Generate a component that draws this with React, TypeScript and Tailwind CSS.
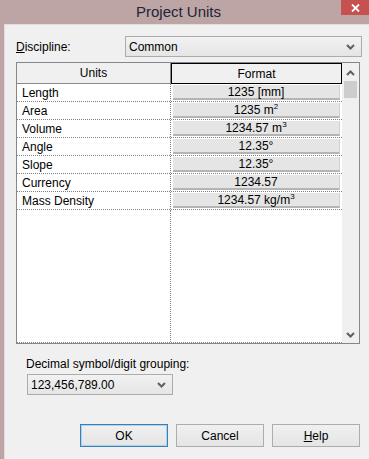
import React from 'react';

const sup = 'text-[8px] relative -top-[5px]';

const rows = [
  { name: 'Length', format: <>1235 [mm]</> },
  { name: 'Area', format: <>1235 m<sup className={sup}>2</sup></> },
  { name: 'Volume', format: <>1234.57 m<sup className={sup}>3</sup></> },
  { name: 'Angle', format: <>12.35°</> },
  { name: 'Slope', format: <>12.35°</> },
  { name: 'Currency', format: <>1234.57</> },
  { name: 'Mass Density', format: <>1234.57 kg/m<sup className={sup}>3</sup></> },
];

function Chevron({ up = false }: { up?: boolean }) {
  return (
    <svg width="9" height="6" viewBox="0 0 9 6" className={up ? 'rotate-180' : ''}>
      <path d="M1 1 L4.5 4.5 L8 1" stroke="#606060" strokeWidth="2" fill="none" />
    </svg>
  );
}

function Combo({ value, className }: { value: string; className: string }) {
  return (
    <div
      className={`h-[21px] flex items-center border border-[#acacac] bg-gradient-to-b from-[#f2f2f2] to-[#e5e5e5] pl-[3px] pr-[6px] ${className}`}
    >
      <span className="flex-1 text-[12px] text-black">{value}</span>
      <Chevron />
    </div>
  );
}

function DlgButton({ children, focused = false }: { children: React.ReactNode; focused?: boolean }) {
  return (
    <div
      className={`w-[88px] h-[23px] flex items-center justify-center text-[12px] text-black bg-gradient-to-b from-[#f0f0f0] to-[#e5e5e5] border ${
        focused ? 'border-[#3c7fb1] shadow-[inset_0_0_0_1px_#a9d3f5]' : 'border-[#acacac]'
      }`}
    >
      {children}
    </div>
  );
}

export default function App() {
  return (
    <div
      className="w-[369px] h-[459px] flex flex-col bg-[#bca5a4] overflow-hidden"
      style={{ fontFamily: '"Liberation Sans", Arial, sans-serif' }}
    >
      {/* Title bar */}
      <div className="h-[24px] flex items-start">
        <div className="flex-1 text-center text-[15px] leading-[24px] text-[#23233a] pl-[16px]">Project Units</div>
        <div className="w-[28px] h-[15px] bg-[#c75050] flex items-center justify-center">
          <svg width="9" height="8" viewBox="0 0 9 8">
            <path d="M1 0.5 L8 7.5 M8 0.5 L1 7.5" stroke="white" strokeWidth="1.8" />
          </svg>
        </div>
      </div>

      {/* Client area */}
      <div className="flex-1 ml-[4px] bg-[#f0f0f0] border-l border-t border-[#e4dcdc] flex flex-col">
        <div className="mt-[11px] flex items-center pr-[7px]">
          <span className="ml-[11px] text-[12px] text-black">
            <span className="underline">D</span>iscipline:
          </span>
          <Combo value="Common" className="ml-auto w-[237px]" />
        </div>

        {/* Grid */}
        <div className="mt-[5px] ml-[11px] w-[344px] h-[282px] border border-[#828790] bg-white flex">
          <div className="w-[325px] flex flex-col text-[12px] text-black">
            <div className="h-[21px] flex">
              <div className="w-[154px] flex items-center justify-center bg-[#f0f0f0] border-b border-r border-[#8a8a8a]">
                Units
              </div>
              <div className="flex-1 flex items-center justify-center bg-[#f0f0f0] border border-black">Format</div>
            </div>
            {rows.map((r) => (
              <div key={r.name} className="h-[18px] flex border-b border-dotted border-[#808080]">
                <div className="w-[154px] pl-[5px] flex items-center border-r border-dotted border-[#808080]">
                  {r.name}
                </div>
                <div className="flex-1 px-[2px] pt-[1px] pb-[1px]">
                  <div className="h-full flex items-center justify-center bg-[#e5e5e5] border-b-2 border-[#b4b4b4] border-r border-r-[#d0d0d0] leading-none">
                    <span>{r.format}</span>
                  </div>
                </div>
              </div>
            ))}
            <div className="flex-1 flex border-b border-dotted border-[#808080]">
              <div className="w-[154px] border-r border-dotted border-[#808080]" />
            </div>
          </div>
          <div className="flex-1 bg-[#f0f0f0] flex flex-col items-center">
            <div className="h-[17px] flex items-center justify-center mt-[1px]">
              <Chevron up />
            </div>
            <div className="w-[13px] h-[17px] bg-[#cdcdcd]" />
            <div className="flex-1" />
            <div className="h-[17px] flex items-center justify-center">
              <Chevron />
            </div>
          </div>
        </div>

        <div className="mt-[11px] ml-[21px] text-[12px] leading-[18px] text-black">
          Decimal symbol/digit <span className="underline">g</span>rouping:
        </div>
        <Combo value="123,456,789.00" className="mt-[1px] ml-[22px] w-[146px]" />

        <div className="mt-[29px] ml-[75px] flex gap-[8px]">
          <DlgButton focused>OK</DlgButton>
          <DlgButton>Cancel</DlgButton>
          <DlgButton>
            <span>
              <span className="underline">H</span>elp
            </span>
          </DlgButton>
        </div>
      </div>
    </div>
  );
}
